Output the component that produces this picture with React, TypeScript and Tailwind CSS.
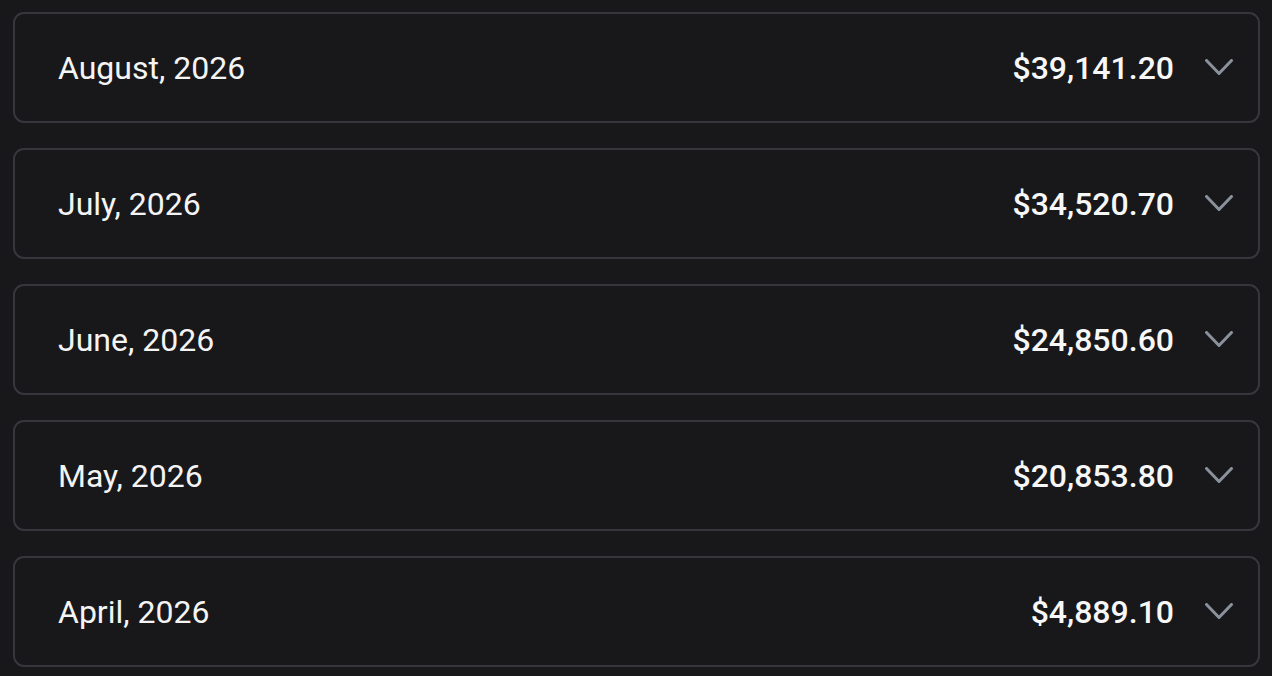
const months = [
  { label: "August, 2026", total: "$39,141.20" },
  { label: "July, 2026", total: "$34,520.70" },
  { label: "June, 2026", total: "$24,850.60" },
  { label: "May, 2026", total: "$20,853.80" },
  { label: "April, 2026", total: "$4,889.10" },
];

function Chevron() {
  return (
    <svg width="28" height="17" viewBox="0 0 28 17" fill="none" className="text-[#8b929c]">
      <polyline
        points="1.5,1.5 14,14.5 26.5,1.5"
        stroke="currentColor"
        strokeWidth="3"
        strokeLinecap="round"
        strokeLinejoin="round"
      />
    </svg>
  );
}

export default function App() {
  return (
    <div
      className="min-h-screen bg-[#18181b] pl-[13px] pr-[12px] pt-[12px] pb-4"
      style={{ fontFamily: "Roboto, 'Liberation Sans', sans-serif" }}
    >
      <div className="flex flex-col gap-[25px]">
        {months.map((m) => (
          <button
            key={m.label}
            className="flex h-[111px] w-full items-center justify-between rounded-[11px] border-2 border-[#36373c] bg-[#18181b] pl-[43px] pr-[25px] text-left"
          >
            <span className="text-[32px] text-[#f4f4f5]">{m.label}</span>
            <span className="flex items-center gap-[31px]">
              <span className="text-[32px] font-medium text-[#f7f7f8]">{m.total}</span>
              <Chevron />
            </span>
          </button>
        ))}
      </div>
    </div>
  );
}
